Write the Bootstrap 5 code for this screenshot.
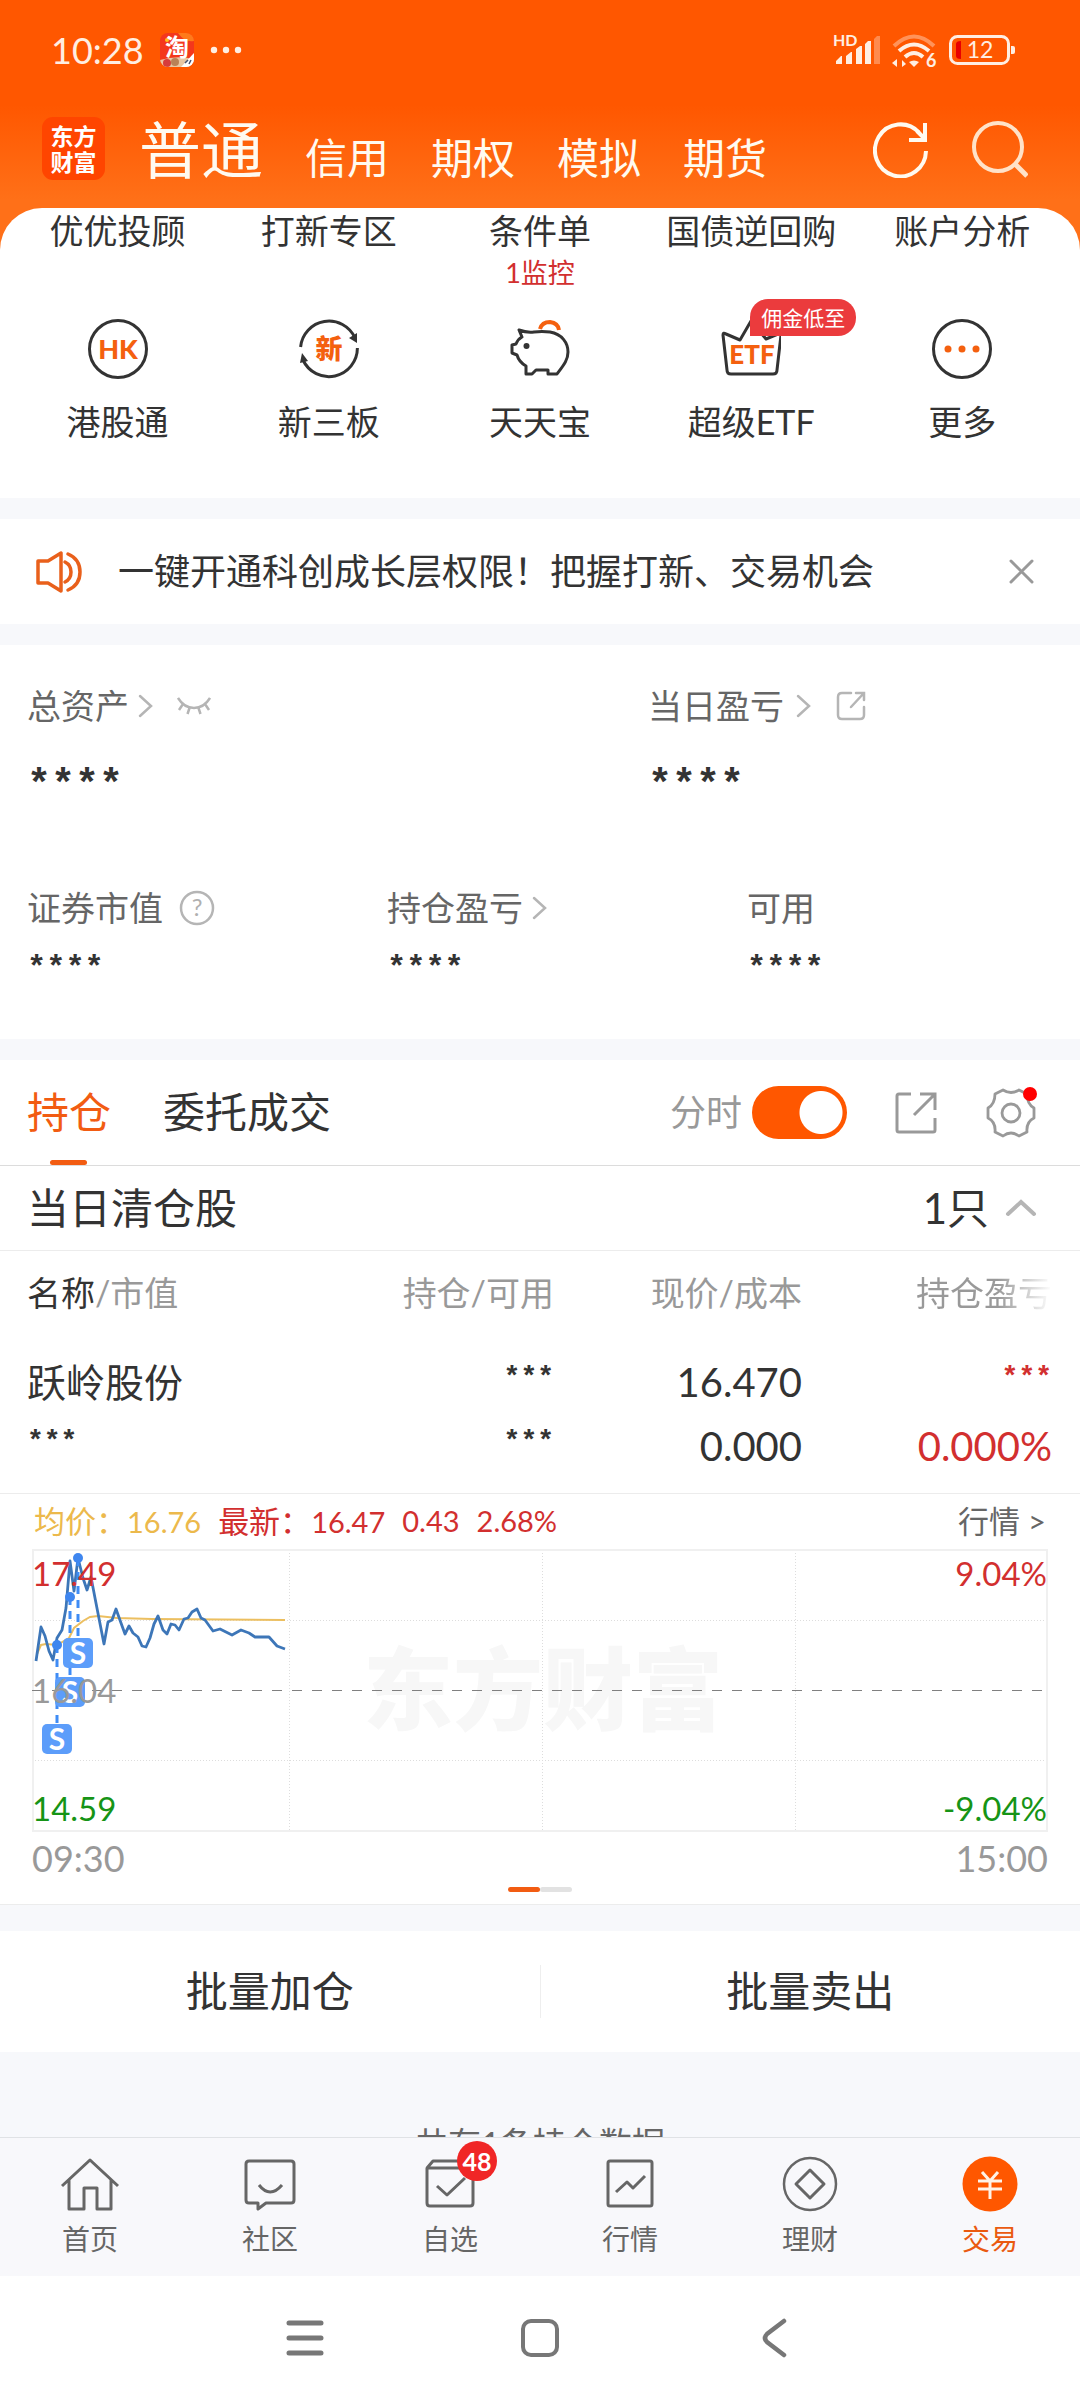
<!DOCTYPE html>
<html lang="zh-CN">
<head>
<meta charset="utf-8">
<meta name="viewport" content="width=device-width, initial-scale=1">
<title>东方财富 - 交易</title>
<link href="https://cdn.jsdelivr.net/npm/bootstrap@5.3.0/dist/css/bootstrap.min.css" rel="stylesheet">
<style>
:root{--orange:#ff5700;--ink:#333;--soft:#666;--pale:#999;--up:#d22f2f;--down:#169416;--gap:#f7f8fb}
body{font-family:Lato,"Noto Sans CJK SC",sans-serif;color:var(--ink);font-size:34px;line-height:46px;background:#fff}
a{color:inherit;text-decoration:none}
button{color:inherit}
svg{display:block;flex:none}
.bare{border:0;background:none;padding:0;line-height:inherit}
.shell{background:linear-gradient(var(--orange) 0,var(--orange) 105px,#ff7018 200px,#ff7018 260px,#fff 260px)}
.statusbar{height:100px;padding:0 64px 0 51px;color:#ffeee2;font-size:36px}
.apphead{height:108px;padding:17px 52px 0 42px;color:#fffaf0}
.logo{width:63px;height:63px;border-radius:11px;background:#ff4500;font-size:23px;line-height:26px;font-weight:700;color:#fff}
.modes{gap:42px;font-size:42px;line-height:62px;margin:2px 0 0 34px}
.modes .on{font-size:62px}
.tools{height:63px;gap:42px}
.panel{background:#fff;border-radius:42px 42px 0 0;padding:0 12px 53px}
.monitor{font-size:27px;line-height:38px;color:var(--up)}
.services2{padding-top:27px}
.svc-icon{margin-bottom:20px}
.tip{left:29px;top:-20px;background:#eb3b3d;color:#fff;font-size:21px;line-height:37px;padding:0 11px;border-radius:18px 18px 18px 0;white-space:nowrap}
.strip{height:21px;background:var(--gap)}
.strip-lg{height:26px}
.notice{padding:28px 46px 28px 36px;gap:36px;font-size:36px;line-height:49px}
.assets{padding:38px 0 50px}
.assets .k{color:var(--soft)}
.cell{padding-left:27px}
.cell-wide{flex:0 0 60%}
.stars,.stars-md,.stars-sm{font-family:"Liberation Mono",monospace;font-weight:700}
.stars{font-size:40px;line-height:48px;margin-top:34px}
.stars-md{font-size:32px;line-height:40px;margin-top:18px}
.assets-more{padding-top:74px}
.tabs{padding:0 43px 0 27px;border-bottom:1px solid #dcdcdc;line-height:105px}
.tabs .nav{gap:52px;font-size:42px}
.tabs .on{color:#f25c12}
.tabs .on::after{content:"";position:absolute;left:50%;bottom:0;width:37px;height:5px;margin-left:-19px;border-radius:3px;background:#f25c12}
.timeshare{font-size:36px;color:var(--pale);gap:10px}
.form-switch .switch-time,.form-switch .switch-time:checked{width:95px;height:53px;margin:0;border:0;border-radius:27px;background:radial-gradient(circle at 69px 50%,#fff 21px,transparent 22px) var(--orange)}
.cleared{font-size:42px;line-height:84px;padding:0 43px 0 27px;border-bottom:1px solid #ececec}
.hold{width:100%;table-layout:fixed}
.holdwrap{padding:0 28px 15px 27px;border-bottom:1px solid #ececec}
.hold th,.hold td{padding:0;text-align:right;font-weight:400}
.hold th{line-height:84px;color:var(--pale);white-space:nowrap}
.hold th:first-child,.hold td:first-child{text-align:left}
.hold th:not(:first-child){width:248px}
.hold th:last-child{width:250px}
.hold tbody::before{content:"";display:block;height:15px}
.hold td{font-size:40px;line-height:64px;vertical-align:top}
.hold .stock{font-size:39px}
.hold .stars-sm{font-size:28px;line-height:56px;font-weight:700}
.ink{color:var(--ink)}
.fade-end{background:linear-gradient(90deg,var(--pale) 60%,#fff 100%);-webkit-background-clip:text;background-clip:text;color:transparent}
.up{color:var(--up)}
.avg{color:#ecb94c}
.more-link{color:var(--soft)}
.quote{padding:0 32px 12px;border-bottom:1px solid #ececec}
.legend-row{font-size:31px;line-height:54px;gap:17px;padding:0 2px}
.legend-row b{font-size:29px;font-weight:400}
.axis{font-size:36px;line-height:52px;color:var(--pale)}
.pager{padding-top:3px}
.pager i{width:32px;height:5px;background:#e2e2e2;border-radius:3px}
.pager .on{background:#f25c12}
.batch .btn{flex:1 1 0;border:0;border-radius:0;color:var(--ink);font-size:42px;line-height:63px;padding:29px 0}
.batch .split{width:1px;margin:34px 0;background:#eee}
.hint{background:var(--gap);color:var(--soft);font-size:33px;line-height:46px;padding-top:68px}
.tabbar{background:#f8f8fb;border-top:1px solid #e0e2e5;color:var(--soft);font-size:28px;line-height:38px;padding:17px 0 18px}
.tabbar svg{margin-bottom:7px}
.tabbar .now{color:#ea5a10}
.tabbar .count{left:50%;margin-left:7px;top:-14px;width:40px;height:40px;border-radius:20px;background:#f02626;color:#fff;font-size:25px;font-weight:700;line-height:40px}
.sysnav{background:#fff;height:124px;gap:175px}
.sysnav .bare{width:60px}
</style>
</head>
<body>
<div class="shell vh-100 d-flex flex-column overflow-hidden">

  <div class="statusbar d-flex flex-shrink-0 align-items-center justify-content-between">
    <div class="d-flex align-items-center">
      <span>10:28</span>
      <svg class="ms-3" width="34" height="34" viewBox="0 0 34 34"><defs><clipPath id="tb"><rect width="34" height="34" rx="8"/></clipPath></defs><g clip-path="url(#tb)"><rect width="34" height="34" fill="#f4371c"/><path d="M18 0h16v8q-9 2-16-8z" fill="#ff7a1a"/><path d="M0 27q17-5 34-1v8H0z" fill="#e8c7a4"/><path d="M21 34l13-14v14z" fill="#fff"/><circle cx="7" cy="30" r="4" fill="#d63c3c"/><circle cx="15" cy="29" r="4" fill="#b98257"/><path d="M25 30l3-3m1 4l2-4" stroke="#46506e" stroke-width="1.5"/><circle cx="7" cy="7" r="2" fill="#ffc21a"/><text x="17" y="23" font-size="24" font-weight="700" fill="#fff" text-anchor="middle">淘</text></g></svg>
      <svg class="ms-3" width="32" height="8" viewBox="0 0 32 8" fill="currentColor"><circle cx="4" cy="4" r="3.2"/><circle cx="16" cy="4" r="3.2"/><circle cx="28" cy="4" r="3.2"/></svg>
    </div>
    <svg width="184" height="48" viewBox="833 26 184 48" fill="currentColor"><text x="834" y="46" font-size="16" font-weight="700">HD</text><path d="M837 64v-3l5-5h1v8zM847 64v-8l5-4h1v12zM857 64V49l4-3h2v18zM866 64V44l3-3h3v23z"/><path d="M875 64V39l3-3h3v28z" opacity=".35"/><g fill="none" stroke="currentColor" stroke-width="4"><path d="M895 46q20-19 40 0" opacity=".4"/><path d="M900 51q15-13 30 0M906 57q9-8 18 0"/></g><path d="M910 62q5-3 10 0l-5 5z"/><path d="M898 59v8l-5-4zM903 67v-7l4 4z"/><text x="927" y="67" font-size="18" font-weight="700">6</text><rect x="951.5" y="36.500" width="58" height="27" rx="7" fill="none" stroke="currentColor" stroke-width="3"/><path d="M1012 46h2q2 0 2 2v4q0 2-2 2h-2z"/><path d="M957 44q0-3 5-3v18q-5 0-5-3z" fill="#e80000"/><text x="981" y="58" font-size="23" text-anchor="middle">12</text></svg>
  </div>

  <header class="apphead d-flex flex-shrink-0 align-items-start">
    <a href="#" class="logo d-flex flex-column align-items-center justify-content-center"><span>东方</span><span>财富</span></a>
    <nav class="modes d-flex align-items-baseline">
      <a href="#" class="on">普通</a><a href="#">信用</a><a href="#">期权</a><a href="#">模拟</a><a href="#">期货</a>
    </nav>
    <div class="tools d-flex align-items-center ms-auto">
      <button class="bare" aria-label="刷新"><svg width="56" height="58" viewBox="0 0 56 58" fill="none" stroke="currentColor" stroke-width="4"><path d="M53 31A25.500 26 0 1 1 46 12.500"/><path d="M52 3v17H36"/><path d="M44 11l8 8"/></svg></button>
      <button class="bare" aria-label="搜索"><svg width="57" height="58" viewBox="0 0 57 58" fill="none" stroke="#ffe2c8" stroke-width="4"><circle cx="27" cy="27" r="24"/><path d="M43 43l13 13" stroke-width="5"/></svg></button>
    </div>
  </header>

  <main class="flex-grow-1 overflow-hidden">
    <section class="panel text-center">
      <div class="row row-cols-5 g-0">
        <a href="#" class="col">优优投顾</a>
        <a href="#" class="col">打新专区</a>
        <a href="#" class="col">条件单<div class="monitor">1监控</div></a>
        <a href="#" class="col">国债逆回购</a>
        <a href="#" class="col">账户分析</a>
      </div>
      <div class="row row-cols-5 g-0 services2">
        <a href="#" class="col d-flex flex-column align-items-center">
          <svg class="svc-icon" width="60" height="60" viewBox="0 0 60 60"><circle cx="30" cy="30" r="28.500" fill="none" stroke="#333" stroke-width="3"/><text x="30" y="39.500" font-size="27" font-weight="900" fill="#f4600f" text-anchor="middle">HK</text></svg>港股通</a>
        <a href="#" class="col d-flex flex-column align-items-center">
          <svg class="svc-icon" width="60" height="60" viewBox="0 0 60 60"><g fill="none" stroke="#333" stroke-width="3"><path d="M1.600 28A28.500 28.500 0 0 1 56 19"/><path d="M58.400 29A28.500 28.500 0 0 1 4 41"/></g><path d="M58 14v10l-8-5zM1 44l2-10 6 8z" fill="#333"/><text x="30" y="40" font-size="27" font-weight="900" fill="#f4600f" text-anchor="middle">新</text></svg>新三板</a>
        <a href="#" class="col d-flex flex-column align-items-center">
          <svg class="svc-icon" width="60" height="60" viewBox="0 0 60 60" fill="none" stroke="#333" stroke-width="3" stroke-linejoin="round"><path d="M9 11q8 3 15 2 8-1 16 0c12 2 18 11 18 20 0 9-6 15-11 22h-9v-4H26l-4 4H16v-8q-7-4-9-11l-5-2V26l4-1q2-5 6-7z"/><circle cx="16.500" cy="27" r="3" fill="#333" stroke="none"/><path d="M30 10q2-7 10-7 8 1 9 8" stroke="#f4600f" stroke-width="4"/></svg>天天宝</a>
        <a href="#" class="col d-flex flex-column align-items-center">
          <span class="position-relative svc-icon"><svg width="60" height="60" viewBox="0 0 60 60"><path d="M5 15q-3-2-3 1l4 35q0 4 4 4h42q4 0 4-4l4-35q0-3-3-1l-12 5-15-18-11 19z" fill="none" stroke="#333" stroke-width="3" stroke-linejoin="round"/><text x="31" y="45" font-size="26" font-weight="900" fill="#f4600f" text-anchor="middle">ETF</text></svg><span class="tip position-absolute">佣金低至</span></span>超级ETF</a>
        <a href="#" class="col d-flex flex-column align-items-center">
          <svg class="svc-icon" width="60" height="60" viewBox="0 0 60 60"><circle cx="30" cy="30" r="28.500" fill="none" stroke="#333" stroke-width="3"/><g fill="#f4600f"><circle cx="16" cy="30" r="3.500"/><circle cx="30" cy="30" r="3.500"/><circle cx="44" cy="30" r="3.500"/></g></svg>更多</a>
      </div>
    </section>

    <div class="strip"></div>
    <section class="notice bg-white d-flex align-items-center">
      <svg width="46" height="42" viewBox="0 0 46 42" fill="none" stroke="#e9601b" stroke-width="3.500" stroke-linejoin="round"><path d="M2 10h10L25 2v38l-13-8H2z"/><path d="M29 11q6 3 6 10t-6 10M32 3q12 5 12 18T32 39" stroke-linecap="round"/></svg>
      <a href="#" class="flex-grow-1">一键开通科创成长层权限！把握打新、交易机会</a>
      <button class="bare" aria-label="关闭"><svg width="25" height="25" viewBox="0 0 25 25" stroke="#999" stroke-width="3" stroke-linecap="round"><path d="M2 2l21 21M23 2L2 23"/></svg></button>
    </section>

    <div class="strip"></div>
    <section class="assets bg-white">
      <div class="d-flex">
        <div class="cell cell-wide">
          <div class="k d-flex align-items-center"><a href="#">总资产</a>
            <svg class="ms-2" width="16" height="24" viewBox="0 0 16 24" fill="none" stroke="#b5b5b5" stroke-width="2.500" stroke-linecap="round"><path d="M3 2l11 10L3 22"/></svg>
            <button class="bare ms-4" aria-label="显示金额"><svg width="34" height="18" viewBox="0 0 34 18" fill="none" stroke="#b5b5b5" stroke-width="2.500"><path d="M1 1q6 10 16 10T33 1M6 7l-4 6M12.500 11l-2 6M21.500 11l2 6M28 7l4 6"/></svg></button>
          </div>
          <div class="stars">****</div>
        </div>
        <div>
          <div class="k d-flex align-items-center"><a href="#">当日盈亏</a>
            <svg class="ms-2" width="20" height="24" viewBox="0 0 20 24" fill="none" stroke="#b5b5b5" stroke-width="2.500" stroke-linecap="round"><path d="M6 2l11 10L6 22"/></svg>
            <button class="bare ms-4" aria-label="分享"><svg width="30" height="30" viewBox="0 0 30 30" fill="none" stroke="#b5b5b5" stroke-width="2.500" stroke-linecap="round"><path d="M15 2H6Q2 2 2 6v18q0 4 4 4h18q4 0 4-4v-8M20 2h8v7M28 2L15 16"/></svg></button>
          </div>
          <div class="stars">****</div>
        </div>
      </div>
      <div class="row row-cols-3 g-0 assets-more">
        <div class="col cell">
          <div class="k d-flex align-items-center">证券市值
            <button class="bare ms-3" aria-label="说明"><svg width="36" height="36" viewBox="0 0 36 36"><circle cx="18" cy="18" r="16" fill="none" stroke="#b5b5b5" stroke-width="2.500"/><text x="18" y="26" font-size="24" fill="#b0b0b0" text-anchor="middle">?</text></svg></button>
          </div>
          <div class="stars-md">****</div>
        </div>
        <div class="col cell">
          <div class="k d-flex align-items-center"><a href="#">持仓盈亏</a>
            <svg class="ms-2" width="16" height="24" viewBox="0 0 16 24" fill="none" stroke="#b5b5b5" stroke-width="2.500" stroke-linecap="round"><path d="M3 2l11 10L3 22"/></svg>
          </div>
          <div class="stars-md">****</div>
        </div>
        <div class="col cell">
          <div class="k">可用</div>
          <div class="stars-md">****</div>
        </div>
      </div>
    </section>

    <div class="strip"></div>
    <section class="bg-white">
      <div class="tabs d-flex justify-content-between">
        <nav class="nav">
          <a href="#" class="on position-relative">持仓</a>
          <a href="#">委托成交</a>
        </nav>
        <div class="d-flex align-items-center">
          <div class="form-check form-switch timeshare d-flex align-items-center p-0 m-0">
            <label for="timeshare">分时</label>
            <input class="form-check-input switch-time float-none" type="checkbox" role="switch" id="timeshare" checked>
          </div>
          <button class="bare ms-5" aria-label="分享持仓"><svg width="42" height="42" viewBox="0 0 42 42" fill="none" stroke="#999" stroke-width="3"><path d="M16 2H4Q2 2 2 4v34q0 2 2 2h34q2 0 2-2V26M25 2h15v16M40 2L19 23"/></svg></button>
          <button class="bare ms-5" aria-label="设置"><svg width="52" height="52" viewBox="0 0 52 52" fill="none" stroke="#999" stroke-width="2.800" stroke-linejoin="round"><path d="M18 3q8 5 16 0l8 4q0 10 7 14v10q-8 4-7 14l-8 4q-8-6-16 0l-8-4q1-10-7-14V21q7-4 7-14z"/><circle cx="26" cy="26" r="9"/><circle cx="45" cy="7" r="7" fill="#f00" stroke="none"/></svg></button>
        </div>
      </div>

      <div class="cleared d-flex justify-content-between">
        <span>当日清仓股</span>
        <button class="bare d-flex align-items-center gap-3"><span>1只</span><svg width="32" height="18" viewBox="0 0 32 18" fill="none" stroke="#b5b5b5" stroke-width="4" stroke-linecap="round"><path d="M3 15L16 3l13 12"/></svg></button>
      </div>

      <div class="holdwrap">
        <table class="hold">
          <thead><tr><th><span class="ink">名称</span>/市值</th><th>持仓/可用</th><th>现价/成本</th><th><span class="fade-end">持仓盈亏</span></th></tr></thead>
          <tbody>
            <tr><td class="stock">跃岭股份</td><td class="stars-sm">***</td><td>16.470</td><td class="stars-sm up">***</td></tr>
            <tr><td class="stars-sm">***</td><td class="stars-sm">***</td><td>0.000</td><td class="up">0.000%</td></tr>
          </tbody>
        </table>
      </div>

      <div class="quote">
        <div class="legend-row d-flex up">
          <span class="avg">均价：<b>16.76</b></span><span>最新：<b>16.47</b></span><b>0.43</b><b>2.68%</b>
          <a href="#" class="ms-auto more-link">行情 &gt;</a>
        </div>
        <svg class="w-100 h-auto" viewBox="0 0 1016 283" font-size="33">
          <text x="511" y="174" font-size="90" font-weight="900" fill="#f7f7f7" text-anchor="middle">东方财富</text>
          <g fill="none" stroke="#ddd" stroke-dasharray="1 2"><path d="M257.500 1v280M510.500 1v280M763.500 1v280M0 71.500h1016M0 211.500h1016"/></g>
          <rect x="1" y="1" width="1014" height="281" fill="none" stroke="#f0f0f0" stroke-width="2"/>
          <path d="M0 141.500h1016" stroke="#808080" stroke-dasharray="10 10"/>
          <path d="M5 105L9 96 14 95 25 96 37 89 42 79 51 72 58 68 66 67 85 69 120 70 253 71" fill="none" stroke="#ecbf60" stroke-width="2"/>
          <polyline fill="none" stroke="#3d76b8" stroke-width="2.800" stroke-linejoin="round" points="4,112 9,78 13,87 17,102 21,111 25,89 30,81 34,59 38,12 42,42 46,9 51,29 55,41 59,28 63,49 72,95 76,73 80,71 84,60 89,74 93,85 97,77 101,84 106,88 110,97 114,98 118,89 122,75 126,67 131,81 135,85 139,75 143,76 147,81 152,70 156,69 160,63 165,60 169,69 173,71 181,82 188,80 200,86 209,81 217,84 223,88 237,88 245,97 253,100"/>
          <g stroke="#3f8cf5" stroke-width="3" stroke-dasharray="8 6"><path d="M46 9v82M38 48v84M25 96v82"/></g>
          <g fill="#3f86ef"><circle cx="46" cy="9" r="5"/><circle cx="38" cy="48" r="5"/><circle cx="25" cy="96" r="5"/></g>
          <g fill="#5c9dfa"><rect x="31" y="89" width="30" height="30" rx="5"/><rect x="23" y="128" width="30" height="30" rx="5"/><rect x="10" y="175" width="30" height="30" rx="5"/></g>
          <g fill="#fff" font-size="30" font-weight="700" text-anchor="middle"><text x="46" y="115">S</text><text x="38" y="154">S</text><text x="25" y="201">S</text></g>
          <g fill="#d22f2f"><text x="0" y="37">17.49</text><text x="1015" y="37" text-anchor="end">9.04%</text></g>
          <text x="0" y="154" fill="#999">16.04</text>
          <g fill="#169416"><text x="0" y="272">14.59</text><text x="1015" y="272" text-anchor="end">-9.04%</text></g>
        </svg>
        <div class="axis d-flex justify-content-between"><span>09:30</span><span>15:00</span></div>
        <div class="pager d-flex justify-content-center"><i class="on"></i><i></i></div>
      </div>
    </section>

    <div class="strip strip-lg"></div>
    <section class="batch bg-white d-flex">
      <button class="btn">批量加仓</button><span class="split"></span><button class="btn">批量卖出</button>
    </section>
    <div class="hint text-center h-100">共有1条持仓数据</div>
  </main>

  <nav class="tabbar row row-cols-6 g-0 text-center flex-shrink-0">
    <a href="#" class="col"><svg class="mx-auto" width="60" height="58" viewBox="0 0 60 58" fill="none" stroke="#666" stroke-width="3" stroke-linejoin="round"><path d="M2 31L30 5l28 26M9 25v29h15V33h13v21h14V25"/></svg>首页</a>
    <a href="#" class="col"><svg class="mx-auto" width="60" height="58" viewBox="0 0 60 58" fill="none" stroke="#666" stroke-width="3" stroke-linejoin="round"><path d="M9 6h42q3 0 3 3v36q0 3-3 3H26l-8 6v-6H9q-3 0-3-3V9q0-3 3-3z"/><path d="M19 30q11 14 23 0"/></svg>社区</a>
    <a href="#" class="col"><span class="d-block position-relative"><svg class="mx-auto" width="60" height="58" viewBox="0 0 60 58" fill="none" stroke="#666" stroke-width="3" stroke-linejoin="round"><path d="M7 13h46v35q0 3-3 3H10q-3 0-3-3zl6-7h35l5 7"/><path d="M17 31l10 9 18-17"/></svg><span class="count position-absolute">48</span></span>自选</a>
    <a href="#" class="col"><svg class="mx-auto" width="60" height="58" viewBox="0 0 60 58" fill="none" stroke="#666" stroke-width="3" stroke-linejoin="round"><rect x="8" y="6" width="44" height="45" rx="2"/><path d="M16 37l11-10 6 6 12-12"/></svg>行情</a>
    <a href="#" class="col"><svg class="mx-auto" width="60" height="58" viewBox="0 0 60 58" fill="none" stroke="#666" stroke-width="2.500" stroke-linejoin="round"><circle cx="30" cy="29" r="26"/><path d="M30 15l14 14-14 14-14-14z" stroke-width="3"/></svg>理财</a>
    <a href="#" class="col now"><svg class="mx-auto" width="60" height="58" viewBox="0 0 60 58" fill="none" stroke="#fff3e8" stroke-width="3"><circle cx="30" cy="29" r="27.500" fill="#ff5700" stroke="none"/><path d="M22 17l8 9 8-9M18 26h24M18 34h24M30 26v18"/></svg>交易</a>
  </nav>
  <div class="sysnav d-flex flex-shrink-0 align-items-center justify-content-center">
    <button class="bare" aria-label="最近任务"><svg class="mx-auto" width="38" height="38" viewBox="0 0 38 38" stroke="#777" stroke-width="5" stroke-linecap="round"><path d="M3 4h32M3 19h32M3 34h32"/></svg></button>
    <button class="bare" aria-label="主屏幕"><svg class="mx-auto" width="40" height="40" viewBox="0 0 40 40"><rect x="3" y="3" width="34" height="34" rx="8" fill="none" stroke="#777" stroke-width="4"/></svg></button>
    <button class="bare" aria-label="返回"><svg class="mx-auto" width="26" height="40" viewBox="0 0 26 40" fill="none" stroke="#777" stroke-width="4.500" stroke-linecap="round"><path d="M22 3L5 16q-4 4 0 8l17 13"/></svg></button>
  </div>
</div>
<script src="https://cdn.jsdelivr.net/npm/bootstrap@5.3.0/dist/js/bootstrap.bundle.min.js"></script>
</body>
</html>
